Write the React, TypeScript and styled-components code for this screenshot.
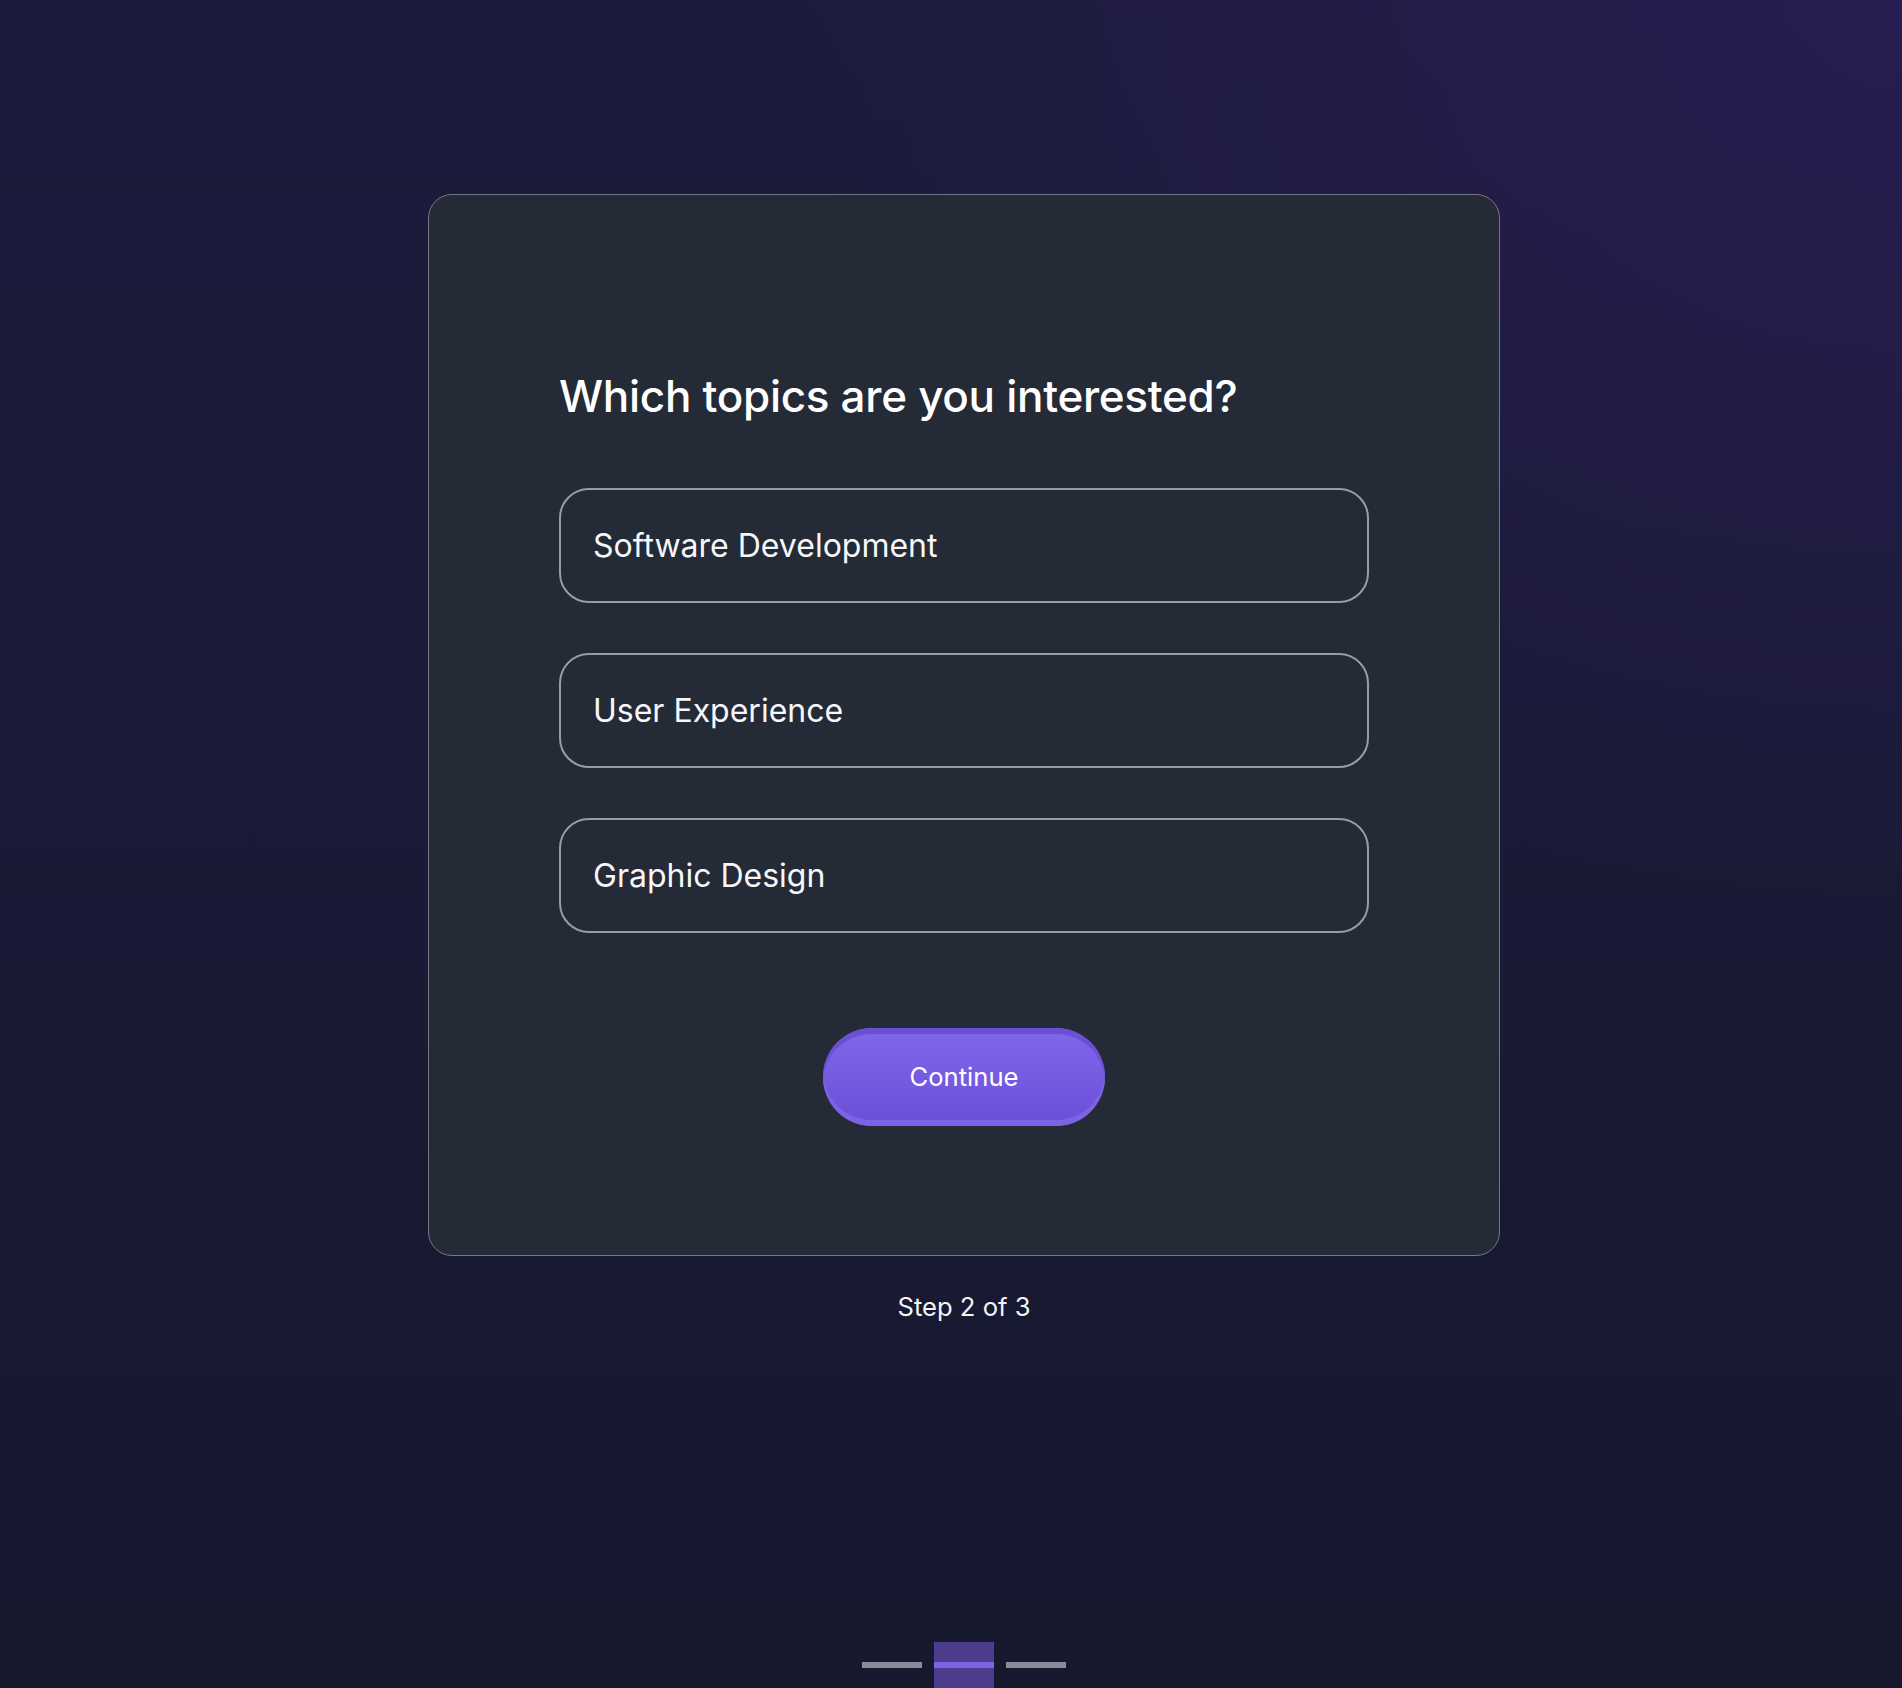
import { createGlobalStyle, styled } from "styled-components";

const topics = ["Software Development", "User Experience", "Graphic Design"];

const GlobalStyle = createGlobalStyle`
  html, body {
    margin: 0;
    padding: 0;
    overflow: hidden;
  }
  body {
    font-family: Inter, "Noto Sans", "Liberation Sans", sans-serif;
    background: #1a1a37;
  }
`;

const App: React.FC = () => {
  return (
    <Page>
      <GlobalStyle />
      <Card>
        <Heading>Which topics are you interested?</Heading>
        <Options>
          {topics.map((t) => (
            <Option key={t}>{t}</Option>
          ))}
        </Options>
        <ContinueButton>Continue</ContinueButton>
      </Card>
      <StepText>Step 2 of 3</StepText>
      <Steps>
        <Step />
        <Step $active />
        <Step />
      </Steps>
    </Page>
  );
};
export default App;

const Page = styled.div`
  min-height: 100vh;
  box-sizing: border-box;
  padding: 194px 0 0 26px;
  display: flex;
  flex-direction: column;
  align-items: center;
  background:
    radial-gradient(
      ellipse 1100px 900px at 100% 0%,
      rgba(44, 30, 90, 0.7),
      rgba(44, 30, 90, 0) 100%
    ),
    linear-gradient(180deg, #1c1b3c 0%, #1a1a36 50%, #16182e 100%);
`;

const Card = styled.div`
  width: 1072px;
  box-sizing: border-box;
  padding: 175px 130px 129px;
  background: #242a36;
  border: 1.5px solid #757883;
  border-radius: 24px;
  display: flex;
  flex-direction: column;
`;

const Heading = styled.h1`
  margin: 0 0 65px;
  font-size: 44px;
  line-height: 1.2;
  font-weight: 500;
  color: #ffffff;
  letter-spacing: -0.3px;
`;

const Options = styled.div`
  display: flex;
  flex-direction: column;
  gap: 50px;
`;

const Option = styled.button`
  height: 115px;
  box-sizing: border-box;
  display: flex;
  align-items: center;
  padding: 0 32px;
  background: transparent;
  border: 2px solid #9a9ca5;
  border-radius: 30px;
  font-family: inherit;
  font-size: 32px;
  font-weight: 400;
  color: #f6f7f9;
  text-align: left;
  cursor: pointer;
`;

const ContinueButton = styled.button`
  align-self: center;
  margin-top: 95px;
  width: 282px;
  height: 98px;
  border: none;
  border-radius: 49px;
  background: linear-gradient(180deg, #7f69e8 0%, #7558e0 60%, #6a4dd6 100%);
  box-shadow:
    inset 0 6px 0 #6b4fd7,
    inset 0 -6px 0 #7c63e4;
  font-family: inherit;
  font-size: 25.6px;
  font-weight: 400;
  color: #ffffff;
  cursor: pointer;
`;

const StepText = styled.div`
  margin-top: 35px;
  font-size: 25.6px;
  line-height: 31px;
  color: #f4f4f8;
`;

const Steps = styled.div`
  margin-top: 320px;
  display: flex;
  gap: 12px;
`;

const Step = styled.div<{ $active?: boolean }>`
  width: 60px;
  height: 52px;
  box-sizing: border-box;
  padding-top: 20px;
  background: ${(p) => (p.$active ? "#4c3e8c" : "transparent")};
  &::after {
    content: "";
    display: block;
    height: 6px;
    background: ${(p) => (p.$active ? "#7d64e6" : "#8b8b98")};
  }
`;
